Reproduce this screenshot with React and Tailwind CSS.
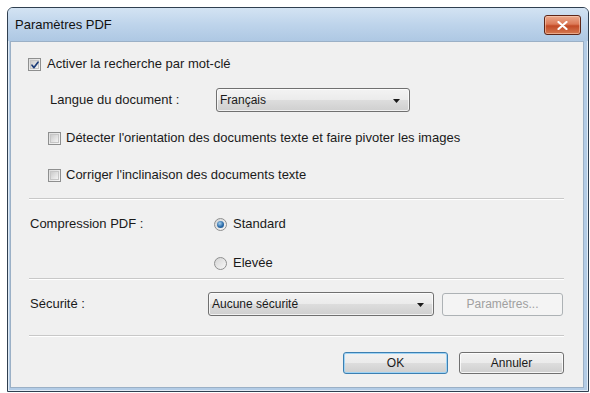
import React from 'react'

const font = { fontFamily: '"Liberation Sans", Arial, sans-serif' }

function CheckBox({ checked }) {
  return (
    <span className="relative inline-flex w-[13px] h-[13px] shrink-0 border border-[#8e8f8f] bg-gradient-to-br from-[#dcdcdc] to-[#f7f7f7] p-[1px]">
      <span className="w-full h-full border border-[#c6c6c6] bg-gradient-to-br from-[#cbcbcb] to-[#f4f4f4]" />
      {checked && (
        <svg className="absolute left-[1px] top-[1px] w-[10px] h-[10px]" viewBox="0 0 10 10">
          <path d="M2 5.2 L4 7.6 L8 2.2" fill="none" stroke="#1f3f7a" strokeWidth="1.7" strokeLinecap="round" strokeLinejoin="round" />
        </svg>
      )}
    </span>
  )
}

function Radio({ checked }) {
  return (
    <span className="relative inline-flex items-center justify-center w-[13px] h-[13px] shrink-0 rounded-full border border-[#8e8f8f] bg-gradient-to-br from-[#d4d4d4] to-[#f8f8f8]">
      {checked && (
        <span className="w-[7px] h-[7px] rounded-full bg-[radial-gradient(circle_at_40%_35%,#a8d2f0,#2a6aa8_55%,#1b4f86)]" />
      )}
    </span>
  )
}

function Combo({ value, width }) {
  return (
    <div
      className="relative flex items-center h-[24px] rounded-[3px] border border-[#707070] bg-[linear-gradient(#f3f3f3,#ebebeb_50%,#dddddd_51%,#cfcfcf)] pl-[3px] shadow-[inset_0_0_0_1px_rgba(255,255,255,0.7)]"
      style={{ width }}
    >
      <span className="text-[12px] text-[#1a1a1a]">{value}</span>
      <svg className="absolute right-[9px] top-[10px] w-[7px] h-[4px]" viewBox="0 0 7 4">
        <path d="M0 0 H7 L3.5 4 Z" fill="#1a1a1a" />
      </svg>
    </div>
  )
}

function Separator() {
  return (
    <div className="ml-[18px] w-[535px] h-[2px] border-t border-[#c8c8c8] border-b border-b-white" />
  )
}

export default function App() {
  return (
    <div className="w-[590px] h-[393px] bg-white pt-[7px] pl-[7px]" style={font}>
      <div className="w-[582px] h-[385px] flex flex-col rounded-t-[6px] border border-[#2f3f50] bg-[#b3cce6] shadow-[inset_0_0_0_1px_rgba(255,255,255,0.6)]">
        {/* Title bar */}
        <div className="h-[33px] flex items-center justify-between pl-[7px] pr-[7px] rounded-t-[5px] bg-[linear-gradient(#d3e3f3,#bed4eb_50%,#aec8e3)]">
          <span className="text-[13px] text-[#111]">Paramètres PDF</span>
          <div className="w-[37px] h-[20px] mt-[1px] flex items-center justify-center rounded-[3px] border border-[#5e2618] bg-[linear-gradient(#eba98c,#dc7a58_45%,#c24a26_55%,#d57a52)] shadow-[inset_0_0_0_1px_rgba(255,220,200,0.5)]">
            <svg className="w-[11px] h-[9px]" viewBox="0 0 11 9">
              <path d="M1.5 1 L9.5 8 M9.5 1 L1.5 8" stroke="#fff" strokeWidth="2.2" strokeLinecap="round" />
            </svg>
          </div>
        </div>

        {/* Content */}
        <div className="flex-1 ml-[2px] mr-[4px] mb-[3px] bg-[#f0f0f0] border border-[#9bb0c6] text-[13px] text-[#1a1a1a] pb-[12px]">
          <div className="mt-[12px] h-[20px] ml-[17px] flex items-center gap-[6px]">
            <CheckBox checked />
            <span>Activer la recherche par mot-clé</span>
          </div>

          <div className="mt-[14px] h-[24px] ml-[39px] flex items-center">
            <span className="w-[166px]">Langue du document :</span>
            <Combo value="Français" width={194} />
          </div>

          <div className="mt-[16px] h-[20px] ml-[37px] flex items-center gap-[5px]">
            <CheckBox />
            <span>Détecter l'orientation des documents texte et faire pivoter les images</span>
          </div>

          <div className="mt-[17px] h-[20px] ml-[37px] flex items-center gap-[5px]">
            <CheckBox />
            <span>Corriger l'inclinaison des documents texte</span>
          </div>

          <div className="mt-[13px]">
            <Separator />
          </div>

          <div className="mt-[14px] h-[20px] ml-[19px] flex items-center">
            <span className="w-[184px]">Compression PDF :</span>
            <Radio checked />
            <span className="ml-[6px]">Standard</span>
          </div>

          <div className="mt-[19px] h-[20px] ml-[203px] flex items-center">
            <Radio />
            <span className="ml-[6px]">Elevée</span>
          </div>

          <div className="mt-[5px]">
            <Separator />
          </div>

          <div className="mt-[12px] h-[24px] ml-[19px] flex items-center">
            <span className="w-[178px]">Sécurité :</span>
            <Combo value="Aucune sécurité" width={226} />
            <button className="ml-[8px] w-[121px] h-[23px] rounded-[3px] border border-[#adb2b5] bg-[#f4f4f4] text-[#a0a0a0] text-[12px]">
              Paramètres...
            </button>
          </div>

          <div className="mt-[19px]">
            <Separator />
          </div>

          <div className="mt-[15px] h-[22px] flex justify-end gap-[11px] mr-[19px]">
            <button className="w-[105px] h-[22px] rounded-[3px] border border-[#3c7fb1] bg-[linear-gradient(#f2f2f2,#ebebeb_50%,#dddddd_51%,#cfcfcf)] shadow-[inset_0_0_0_1px_#9fd3f4] text-[12px] text-[#1a1a1a]">
              OK
            </button>
            <button className="w-[105px] h-[22px] rounded-[3px] border border-[#707070] bg-[linear-gradient(#f2f2f2,#ebebeb_50%,#dddddd_51%,#cfcfcf)] shadow-[inset_0_0_0_1px_rgba(255,255,255,0.8)] text-[12px] text-[#1a1a1a]">
              Annuler
            </button>
          </div>
        </div>
      </div>
    </div>
  )
}
